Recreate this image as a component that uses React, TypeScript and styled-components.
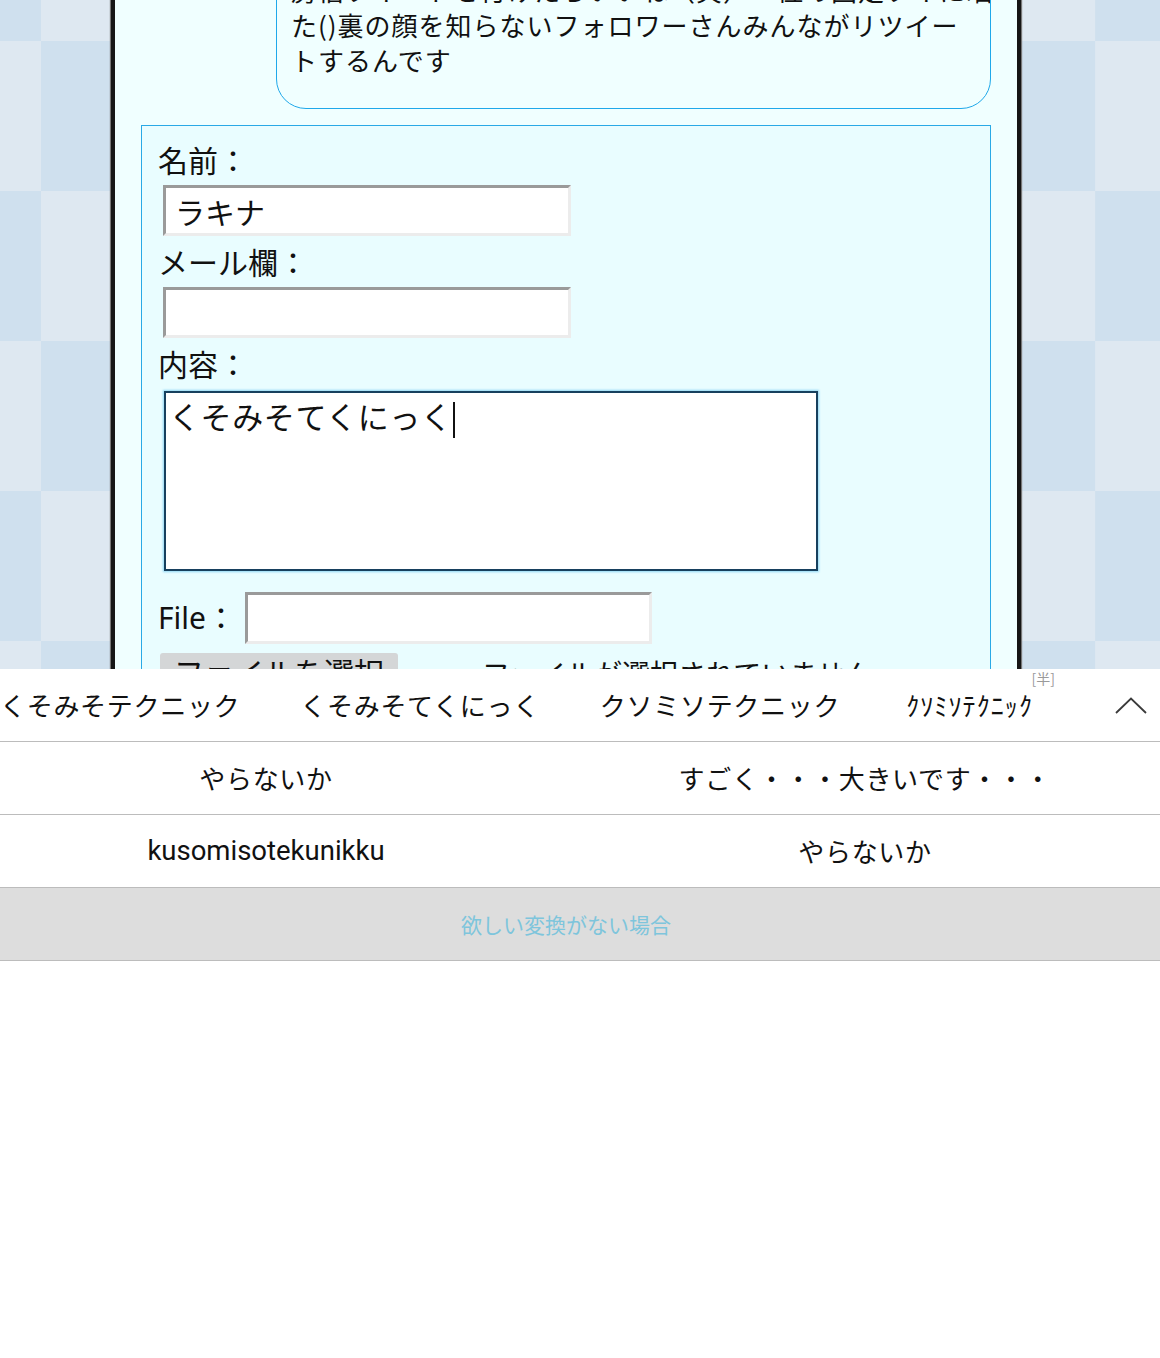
import styled, { createGlobalStyle } from 'styled-components';

const JP = `"Noto Sans CJK JP", "Noto Sans", sans-serif`;

const GlobalStyle = createGlobalStyle`
  html, body {
    margin: 0;
    padding: 0;
    background: #ffffff;
  }
  body {
    font-family: ${JP};
    color: #111;
  }
`;

const Screen = styled.div`
  width: 1160px;
  height: 1358px;
  display: flex;
  flex-direction: column;
  overflow: hidden;
  background: #ffffff;
`;

// browser area, page scrolled so the top of the thread is hidden
const WebView = styled.div`
  flex: none;
  height: 669px;
  overflow: hidden;
  background-color: #dee8f1;
  background-image: repeating-conic-gradient(#dee8f1 0 25%, #cfe0ee 0 50%);
  background-size: 301.2px 300px;
  background-position: -109.6px -109px;
`;

const Panel = styled.div`
  width: 902px;
  height: 100%;
  margin-left: 111px;
  border-left: 4px solid #161616;
  border-right: 4px solid #161616;
  box-shadow: -1px 0 1px #777, 1px 0 1px #777;
  background: #f0ffff;
  display: flex;
  flex-direction: column;
`;

const Bubble = styled.div`
  flex: none;
  margin: -42px 26px 0 161px;
  padding: 13px 14px 31px;
  border: 1px solid #1fa8ea;
  border-radius: 30px;
  background: #f0ffff;
  font-size: 26px;
  line-height: 35px;
  letter-spacing: 1px;
  white-space: nowrap;
  overflow: hidden;
`;

const PostForm = styled.div`
  flex: 1 0 auto;
  margin: 16px 26px 0;
  padding: 13px 16px 0;
  border: 1px solid #2aa9e6;
  border-bottom: none;
  background: #e9fdff;
`;

const Label = styled.div`
  font-size: 30px;
  line-height: 40px;
`;

const Field = styled.input`
  display: block;
  box-sizing: border-box;
  width: 408px;
  height: 51px;
  margin: 6px 0 5px 5px;
  padding: 0 9px;
  border-style: solid;
  border-width: 3px;
  border-color: #9a9a9a #ececec #ececec #9a9a9a;
  background: #ffffff;
  font-family: ${JP};
  font-size: 30px;
  color: #111;
  outline: none;
`;

const ContentBox = styled.div`
  box-sizing: border-box;
  width: 654px;
  height: 180px;
  margin: 8px 0 0 6px;
  padding: 3px 3px;
  border: 2px solid #17405e;
  box-shadow: 0 0 2px 1px #8ed6f5;
  background: #ffffff;
  font-size: 31px;
  line-height: 40px;
  letter-spacing: 0.6px;
`;

const Caret = styled.span`
  display: inline-block;
  width: 1.5px;
  height: 36px;
  margin-left: 1px;
  vertical-align: -9px;
  background: #111;
`;

const FileRow = styled.div`
  display: flex;
  align-items: center;
  margin-top: 21px;
`;

const FileLabel = styled.div`
  flex: 0 0 87px;
  font-family: "Noto Sans", ${JP};
  font-size: 30px;
  line-height: 40px;
`;

const FileField = styled(Field)`
  width: 407px;
  height: 52px;
  margin: 0;
`;

const PickerRow = styled.div`
  display: flex;
  align-items: flex-start;
  gap: 24px;
  margin-top: 9px;
  padding-left: 2px;
`;

const PickButton = styled.button`
  height: 48px;
  padding: 0 14px;
  border: none;
  border-radius: 3px;
  background: #d4d6d7;
  font-family: ${JP};
  font-size: 30px;
  line-height: 36px;
  color: #111;
  display: flex;
  align-items: flex-start;
`;

const PickNote = styled.span`
  font-size: 28px;
  line-height: 40px;
  padding-left: 60px;
`;

// IME candidate panel
const Candidates = styled.div`
  flex: 1;
  background: #ffffff;
  display: flex;
  flex-direction: column;
`;

const CandidateRow = styled.div<{ $muted?: boolean }>`
  height: 72px;
  flex: none;
  border-bottom: 1px solid #bcbcbc;
  background: ${(p) => (p.$muted ? '#dddddd' : '#ffffff')};
`;

const TopStrip = styled(CandidateRow)`
  display: flex;
  align-items: center;
  gap: 60px;
`;

const Word = styled.span<{ $half?: boolean }>`
  position: relative;
  margin-left: ${(p) => (p.$half ? '6px' : '0')};
  font-size: 26px;
  line-height: 36px;
  letter-spacing: ${(p) => (p.$half ? '1.1px' : '0.7px')};
  white-space: nowrap;
`;

const HalfBadge = styled.span`
  position: absolute;
  top: -16px;
  right: -22px;
  font-size: 14px;
  line-height: 14px;
  letter-spacing: 0;
  color: #9a9a9a;
`;

const Collapse = styled.span`
  margin-left: auto;
  margin-right: 13px;
  display: flex;
`;

const PairRow = styled(CandidateRow)`
  display: grid;
  grid-template-columns: 532px 1fr;
  column-gap: 38px;
  align-items: center;
  justify-items: center;
`;

const Latin = styled(Word)`
  font-family: Roboto, "Noto Sans", sans-serif;
  font-size: 27.5px;
  letter-spacing: 0;
`;

const MoreRow = styled(CandidateRow)`
  display: flex;
  align-items: center;
  justify-content: center;
  padding-right: 28px;
`;

const MoreText = styled.span`
  font-size: 21px;
  color: #7ec5dc;
`;

const ChevronUp = () => (
  <svg width="32" height="17" viewBox="0 0 32 17" fill="none">
    <polyline points="1,16 16,1.5 31,16" stroke="#3a3a3a" strokeWidth="1.8" />
  </svg>
);

export default function App() {
  return (
    <Screen>
      <GlobalStyle />
      <WebView>
        <Panel>
          <Bubble>
            房信ツイートを付けたらいいね（笑）一位の固定ツイに晒され
            <br />
            た()裏の顔を知らないフォロワーさんみんながリツイー
            <br />
            トするんです
          </Bubble>
          <PostForm>
            <Label>名前：</Label>
            <Field defaultValue="ラキナ" />
            <Label>メール欄：</Label>
            <Field defaultValue="" />
            <Label>内容：</Label>
            <ContentBox>
              くそみそてくにっく
              <Caret />
            </ContentBox>
            <FileRow>
              <FileLabel>File：</FileLabel>
              <FileField defaultValue="" />
            </FileRow>
            <PickerRow>
              <PickButton>ファイルを選択</PickButton>
              <PickNote>ファイルが選択されていません</PickNote>
            </PickerRow>
          </PostForm>
        </Panel>
      </WebView>
      <Candidates>
        <TopStrip>
          <Word>くそみそテクニック</Word>
          <Word>くそみそてくにっく</Word>
          <Word>クソミソテクニック</Word>
          <Word $half>
            ｸｿﾐｿﾃｸﾆｯｸ
            <HalfBadge>[半]</HalfBadge>
          </Word>
          <Collapse>
            <ChevronUp />
          </Collapse>
        </TopStrip>
        <PairRow>
          <Word>やらないか</Word>
          <Word>すごく・・・大きいです・・・</Word>
        </PairRow>
        <PairRow>
          <Latin>kusomisotekunikku</Latin>
          <Word>やらないか</Word>
        </PairRow>
        <MoreRow $muted>
          <MoreText>欲しい変換がない場合</MoreText>
        </MoreRow>
      </Candidates>
    </Screen>
  );
}
